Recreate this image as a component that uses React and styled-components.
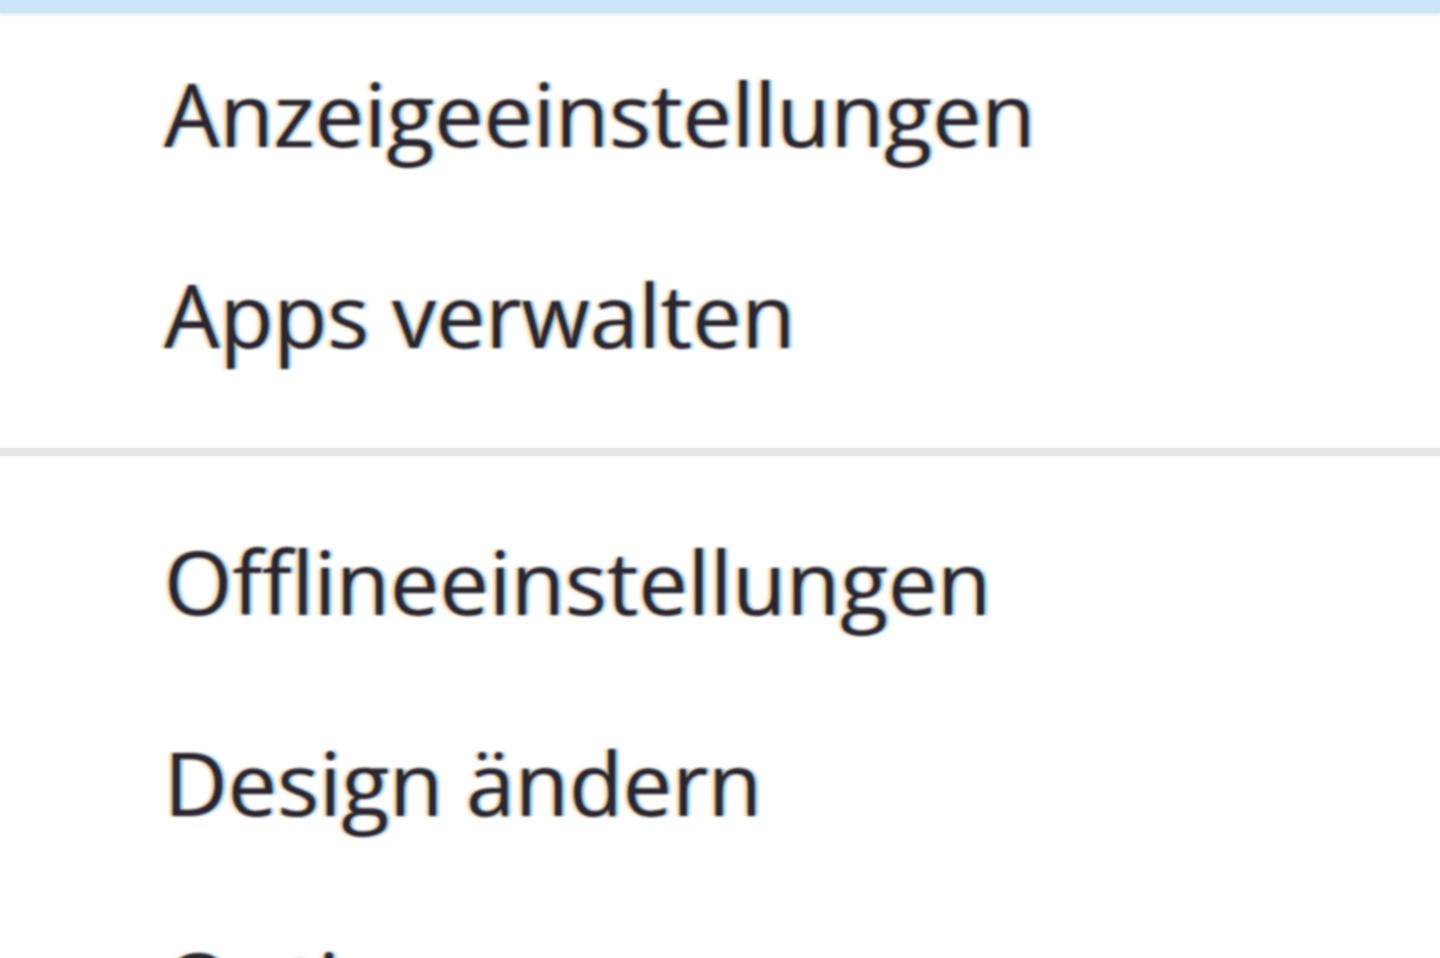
import React from 'react';
import styled, { createGlobalStyle } from 'styled-components';

const GlobalStyle = createGlobalStyle`
    html, body {
        margin: 0;
        padding: 0;
        background: #ffffff;
        overflow: hidden;
    }
`;

const menuGroups = [
    ['Anzeigeeinstellungen', 'Apps verwalten'],
    ['Offlineeinstellungen', 'Design ändern', 'Optionen'],
];

export default function App() {
    return (
        <>
            <GlobalStyle />
            <Menu>
                <HoverEdge />
                {menuGroups.map((group, i) => (
                    <Group key={i}>
                        {i > 0 && <Separator />}
                        {group.map(label => (
                            <MenuItem key={label}>
                                <Label>{label}</Label>
                            </MenuItem>
                        ))}
                    </Group>
                ))}
            </Menu>
        </>
    );
}

const Menu = styled.nav`
    width: 1440px;
    height: 958px;
    overflow: hidden;
    background: #ffffff;
    display: flex;
    flex-direction: column;
`;

// bottom edge of the highlighted item above
const HoverEdge = styled.div`
    flex: 0 0 auto;
    height: 13px;
    background: #cce4f7;
    box-shadow: 0 2px 3px rgba(204, 228, 247, 0.7);
`;

const Group = styled.div`
    display: flex;
    flex-direction: column;
`;

const Separator = styled.div`
    height: 8px;
    margin: 33px 0 25px;
    background: #e6e6e6;
    box-shadow: 0 0 3px #ececec;
`;

const MenuItem = styled.div`
    flex: 0 0 auto;
    height: 201px;
    display: flex;
    align-items: center;
    padding-left: 164px;
    box-sizing: border-box;
`;

const Label = styled.span`
    font-family: 'Open Sans', 'Noto Sans', 'Liberation Sans', sans-serif;
    font-size: 88px;
    line-height: 201px;
    letter-spacing: 0px;
    font-variant-ligatures: none;
    color: #2b2530;
    white-space: nowrap;
    filter: blur(0.8px);
    text-shadow: -3px 0 2px rgba(255, 165, 50, 0.6), 3px 0 2px rgba(50, 170, 255, 0.6);
`;
